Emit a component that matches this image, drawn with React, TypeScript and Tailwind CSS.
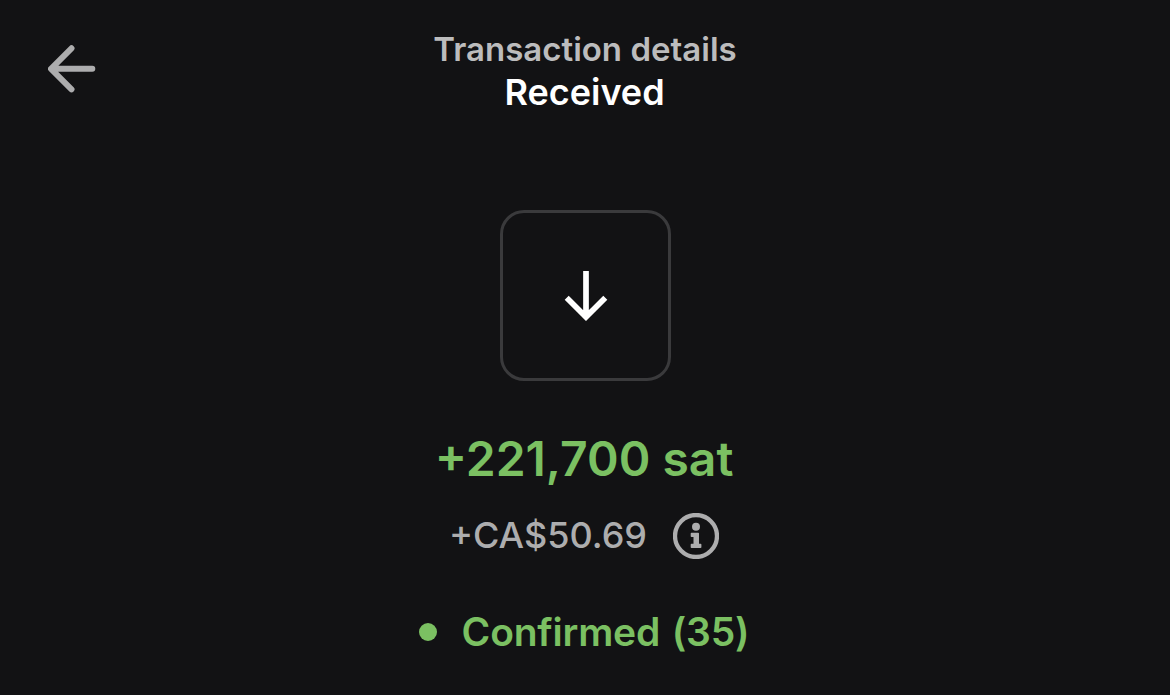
const BackIcon = () => (
  <svg width="48" height="48" viewBox="0 0 48 48" fill="none" stroke="currentColor" strokeWidth="6" strokeLinecap="round" strokeLinejoin="round">
    <path d="M44.300 23.800H4M23.500 3.300L3 23.800L23.500 44.300" />
  </svg>
);

const DownIcon = () => (
  <svg width="44" height="50" viewBox="0 0 44 50" fill="none" stroke="currentColor" strokeWidth="5.700">
    <path d="M22 0V45M2.700 26.700L22 46L41.300 26.700" />
  </svg>
);

const InfoIcon = () => (
  <svg width="46" height="46" viewBox="0 0 46 46" fill="none">
    <circle cx="23" cy="23" r="21" stroke="currentColor" strokeWidth="4.300" />
    <circle cx="23" cy="13.800" r="4" fill="currentColor" />
    <path d="M18.500 19.700H25.200Q26 19.700 26 20.500V30.700H27.500Q28.400 30.700 28.400 31.500V34.200Q28.400 35 27.500 35H18.500Q17.700 35 17.700 34.200V31.500Q17.700 30.700 18.500 30.700H20.500V24H18.500Q17.700 24 17.700 23.200V20.500Q17.700 19.700 18.500 19.700Z" fill="currentColor" />
  </svg>
);

export default function App() {
  return (
    <main className="flex h-[695px] w-[1170px] flex-col items-center overflow-hidden bg-[#121214] font-['Inter',sans-serif]">
      {/* Header */}
      <header className="grid w-full grid-cols-[1fr_auto_1fr] pt-7">
        <button aria-label="Back" className="ml-12 mt-[17px] h-12 w-12 text-[#adadae]">
          <BackIcon />
        </button>
        <div className="text-center">
          <p className="text-[33px] leading-[43px] font-semibold text-[#bcbcbd]">Transaction details</p>
          <h1 className="pr-px text-[36px] leading-[43px] font-semibold text-white">Received</h1>
        </div>
      </header>

      <div className="mt-24 flex h-[171px] w-[171px] items-center justify-center rounded-[24px] border-3 border-[#3a3a3c] pl-px text-white">
        <DownIcon />
      </div>

      {/* Amount */}
      <p className="mt-[48px] pr-[2px] text-[48px] leading-[60px] font-semibold text-[#7bc062]">+221,700 sat</p>
      <div className="mt-[23px] flex h-[48px] items-center gap-[26px] pr-[2px] text-[#adadae]">
        <span className="pb-[2px] text-[36px] font-medium">+CA$50.69</span>
        <InfoIcon />
      </div>

      {/* Status */}
      <div className="mt-[47px] flex h-[50px] items-center gap-[25px] pr-[2px] text-[#7bc062]">
        <span className="h-[18px] w-[18px] rounded-full bg-current" />
        <span className="text-[39px] font-semibold tracking-[-0.2px] [font-feature-settings:'calt'_0] [word-spacing:2px]">Confirmed (35)</span>
      </div>
    </main>
  );
}
